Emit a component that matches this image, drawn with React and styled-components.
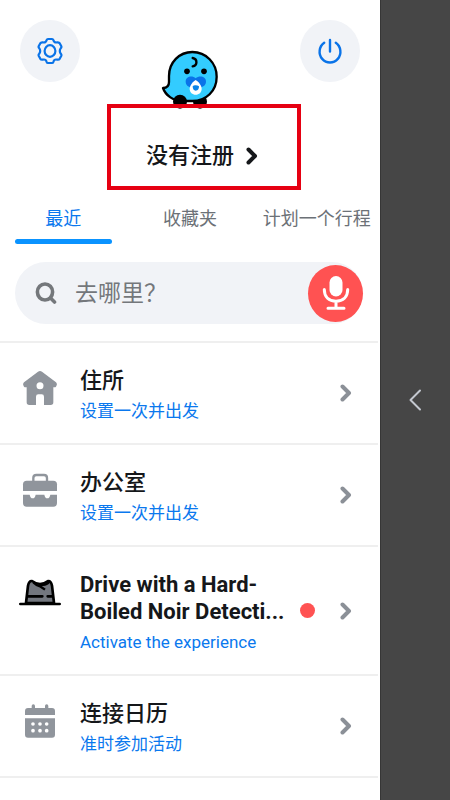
import React, { useState } from "react";
import styled, { createGlobalStyle } from "styled-components";

const GlobalStyle = createGlobalStyle`
  * {
    box-sizing: border-box;
  }
  body {
    margin: 0;
    background: #fff;
    font-family: Roboto, "Noto Sans CJK SC", sans-serif;
  }
  button,
  input {
    font-family: inherit;
    border: none;
    padding: 0;
    background: none;
  }
  button {
    cursor: pointer;
  }
  svg {
    display: block;
    flex-shrink: 0;
  }
`;

const Container = styled.div`
  display: flex;
  min-height: 100vh;
`;

const Panel = styled.main`
  flex: 1;
  min-width: 0;
  background: #fff;
`;

/* Dimmed map to the right of the menu */
const MapSide = styled.aside`
  width: 70px;
  display: flex;
  align-items: center;
  justify-content: center;
  padding-right: 2px;
  background: #464646;
  border-left: 1px solid #363636;
`;

const BackButton = styled.button`
  padding: 8px;
`;

/* Top bar */
const Header = styled.header`
  display: flex;
  align-items: flex-start;
  justify-content: space-between;
  padding: 20px 20px 0;
`;

const RoundButton = styled.button`
  width: 60px;
  height: 62px;
  display: flex;
  align-items: center;
  justify-content: center;
  border-radius: 50%;
  background: #f1f3f7;
`;

const Avatar = styled.svg`
  width: 58px;
  height: 60px;
  margin-top: 30px;
`;

/* Profile name */
const Profile = styled.div`
  display: grid;
  grid-template-columns: 1fr auto 1fr;
  margin-top: 31px;
`;

const ProfileName = styled.button`
  grid-column: 2;
  position: relative;
  color: #15171a;
  font-size: 22px;
  font-weight: 500;
  line-height: 30px;
`;

const ProfileChevron = styled.span`
  display: flex;
  align-items: center;
  padding-left: 12px;
`;

const Highlight = styled.span`
  position: absolute;
  top: -37px;
  right: -67px;
  bottom: -19px;
  left: -39px;
  border: 4px solid #e60012;
  pointer-events: none;
`;

/* Tabs */
const Tabs = styled.div`
  display: grid;
  grid-template-columns: repeat(3, minmax(0, 1fr));
  margin-top: 36px;
`;

const Tab = styled.button`
  padding: 0 15px;
  white-space: nowrap;
  font-size: 18px;
  line-height: 24px;
  color: ${(props) => (props.$active ? "#0a78ee" : "#6c7177")};

  &::after {
    content: "";
    display: block;
    height: 5px;
    margin-top: 8px;
    border-radius: 3px;
    background: ${(props) => (props.$active ? "#0a93ff" : "transparent")};
  }
`;

const TabLabel = styled.span`
  display: flex;
  justify-content: center;
`;

/* Search */
const SearchBox = styled.form`
  display: flex;
  align-items: center;
  height: 62px;
  margin: 18px 17px 17px 15px;
  padding-left: 20px;
  border-radius: 31px;
  background: #f1f3f7;
`;

const Input = styled.input`
  flex: 1;
  min-width: 0;
  height: 40px;
  margin-left: 18px;
  outline: none;
  color: #15171a;
  font-size: 23px;

  &::placeholder {
    color: #74777b;
    opacity: 1;
  }
`;

const MicButton = styled.button`
  width: 55px;
  height: 57px;
  display: flex;
  align-items: center;
  justify-content: center;
  border-radius: 50%;
  background: #ff5252;
`;

/* Places */
const List = styled.ul`
  list-style: none;
  margin: 0 2px 0 0;
  padding: 0;
  border-top: 2px solid #efefef;
`;

const Item = styled.li`
  border-bottom: 2px solid #efefef;
`;

const Row = styled.button`
  display: flex;
  width: 100%;
  padding: 20px 26px 20px 18px;
  text-align: left;
`;

const RowIcon = styled.svg`
  width: 44px;
  height: 34px;
  margin-top: 8px;
  fill: #90959c;
`;

const RowText = styled.span`
  flex: 1;
  min-width: 0;
  margin-left: 18px;
  padding-top: 4px;
`;

const Title = styled.span`
  display: block;
  color: #15171a;
  font-size: 22px;
  font-weight: ${(props) => (props.$bold ? 700 : 500)};
  line-height: 27px;
`;

const Subtitle = styled.span`
  display: block;
  margin-top: 5px;
  color: #0a78ee;
  font-size: 17px;
  line-height: 24px;
`;

const Dot = styled.span`
  width: 15px;
  height: 15px;
  margin-right: 25px;
  align-self: center;
  border-radius: 50%;
  background: #ff5252;
`;

const RowEnd = styled.span`
  display: flex;
  align-self: center;
`;

const Chevron = ({ color }) => (
  <svg width="12" height="18" viewBox="0 0 12 18" aria-hidden="true">
    <path
      d="M2.5 2.5 L9 9 L2.5 15.5"
      fill="none"
      stroke={color}
      strokeWidth="4"
      strokeLinecap="round"
      strokeLinejoin="round"
    />
  </svg>
);

const GearIcon = () => (
  <svg width="26" height="28" viewBox="0 0 26 28" aria-hidden="true">
    <g fill="none" stroke="#0a73e8" strokeWidth="2.2" strokeLinejoin="round">
      <path d="M11 2 H15 Q16 2 16.4 3.2 Q17.2 6 20 5.4 Q22 5 22.8 6.4 L24.2 9 Q24.8 10.2 23.8 11.2 Q21.8 14 23.8 16.8 Q24.8 17.8 24.2 19 L22.8 21.6 Q22 23 20 22.6 Q17.2 22 16.4 24.8 Q16 26 15 26 H11 Q10 26 9.6 24.8 Q8.8 22 6 22.6 Q4 23 3.2 21.6 L1.8 19 Q1.2 17.8 2.2 16.8 Q4.2 14 2.2 11.2 Q1.2 10.2 1.8 9 L3.2 6.4 Q4 5 6 5.4 Q8.8 6 9.6 3.2 Q10 2 11 2 Z" />
      <ellipse cx="13" cy="14" rx="5.4" ry="5.8" />
    </g>
  </svg>
);

const PowerIcon = () => (
  <svg width="26" height="28" viewBox="0 0 26 28" aria-hidden="true">
    <path
      d="M13 3 V14.5 M7.2 5.8 A10.4 10.8 0 1 0 18.8 5.8"
      fill="none"
      stroke="#0a73e8"
      strokeWidth="2.4"
      strokeLinecap="round"
    />
  </svg>
);

const SearchIcon = () => (
  <svg width="22" height="24" viewBox="0 0 22 24" aria-hidden="true">
    <g fill="none" stroke="#74777b" strokeWidth="3.6" strokeLinecap="round">
      <ellipse cx="10" cy="11" rx="7.6" ry="8" />
      <path d="M15.5 17 L19.5 21" />
    </g>
  </svg>
);

const MicIcon = () => (
  <svg width="28" height="36" viewBox="0 0 28 36" aria-hidden="true">
    <rect x="7.5" y="1" width="13" height="20.5" rx="6.5" fill="#fff" />
    <path
      d="M2.3 14.5 C2.3 22 7 26.2 14 26.2 C21 26.2 25.7 22 25.7 14.5 M14 26.2 V33 M6 33.2 H22"
      fill="none"
      stroke="#fff"
      strokeWidth="3"
      strokeLinecap="round"
    />
  </svg>
);

const BackIcon = () => (
  <svg width="14" height="24" viewBox="0 0 14 24" aria-hidden="true">
    <path
      d="M12 2.5 L2.5 12 L12 21.5"
      fill="none"
      stroke="#c4c8d0"
      strokeWidth="2"
      strokeLinecap="round"
      strokeLinejoin="round"
    />
  </svg>
);

const BabyWazer = () => (
  <Avatar viewBox="33 31 174 180" aria-hidden="true">
    <circle cx="150" cy="186" r="21" />
    <path
      d="M39 145 C52 145 57 139 57 127 V109 C57 68 88 37 127 37 C168 37 200 70 200 111 C200 154 168 184 127 184 H99 C70 184 47 168 39 145 Z"
      fill="#33ccff"
      stroke="#000"
      strokeWidth="7"
      strokeLinejoin="round"
    />
    <circle cx="90" cy="186" r="21" />
    <circle cx="111" cy="95" r="8.5" />
    <circle cx="162" cy="95" r="8.5" />
    <path
      d="M128 55 C143 58 143 77 128 80"
      fill="none"
      stroke="#000"
      strokeWidth="7"
      strokeLinecap="round"
    />
    <path
      d="M137 116 C128 107 107 109 107 126 C107 139 120 145 137 146 C154 145 168 139 168 126 C168 109 147 107 137 116 Z"
      fill="#0a73e8"
    />
    <path
      d="M137 121 C145 126 155 137 155 147 C155 158 147 165 137 165 C127 165 119 158 119 147 C119 137 129 126 137 121 Z"
      fill="#fff"
    />
    <path
      d="M128 140 C132 136 142 136 147 140 C147 148 144 153 137 153 C131 153 128 148 128 140 Z"
      fill="#0a83e8"
    />
  </Avatar>
);

const HomeIcon = () => (
  <RowIcon viewBox="54 93 132 102" aria-hidden="true">
    <path
      fillRule="evenodd"
      d="M114 95 Q120 91 126 95 L168 127 Q172 131 170 136 L168 140 Q167 142 162 142 H160 V187 Q160 195 152 195 H132 V170 Q132 163 125 163 H115 Q108 163 108 170 V195 H88 Q80 195 80 187 V142 H78 Q73 142 72 140 L70 136 Q68 131 72 127 Z M120 127 A10.5 10.5 0 1 0 120 148 A10.5 10.5 0 1 0 120 127 Z"
    />
  </RowIcon>
);

const WorkIcon = () => (
  <RowIcon viewBox="54 399 132 102" aria-hidden="true">
    <path
      d="M100 424 V414 Q100 405 109 405 H132 Q141 405 141 414 V424"
      fill="none"
      stroke="#90959c"
      strokeWidth="7"
    />
    <path d="M80 422 H160 Q171 422 171 433 V453 H69 V433 Q69 422 80 422 Z" />
    <path d="M69 464 H89 Q91 475 98 475 Q105 475 107 464 H133 Q135 475 142 475 Q149 475 151 464 H171 V489 Q171 500 160 500 H80 Q69 500 69 489 Z" />
  </RowIcon>
);

const HatIcon = () => (
  <RowIcon viewBox="24 30 132 102" aria-hidden="true">
    <path
      d="M48 114 L54 62 Q57 47 66 48 Q77 56 90 57 Q103 56 114 48 Q123 47 126 62 L132 114 Z"
      fill="#73777f"
      stroke="#000"
      strokeWidth="8"
      strokeLinejoin="round"
    />
    <path
      d="M70 52 Q79 61 90 64 Q98 69 105 74 M88 58 Q108 64 118 50"
      fill="none"
      stroke="#000"
      strokeWidth="7"
    />
    <path
      d="M54 94 H97 M113 94 H128 M31 117 H149"
      fill="none"
      stroke="#000"
      strokeWidth="8"
      strokeLinecap="round"
    />
  </RowIcon>
);

const CalendarIcon = () => (
  <RowIcon viewBox="54 477 132 102" aria-hidden="true">
    <path d="M84 489 H95 V483 Q95 478 100 478 Q105 478 105 483 V489 H135 V483 Q135 478 140 478 Q145 478 145 483 V489 H156 Q165 489 165 498 V510 H75 V498 Q75 489 84 489 Z" />
    <path d="M75 520 H165 V569 Q165 578 156 578 H84 Q75 578 75 569 Z" />
    <g fill="#fff">
      <circle cx="99" cy="537" r="5.5" />
      <circle cx="120" cy="537" r="5.5" />
      <circle cx="140" cy="537" r="5.5" />
      <circle cx="99" cy="557" r="5.5" />
      <circle cx="120" cy="557" r="5.5" />
      <circle cx="140" cy="557" r="5.5" />
    </g>
  </RowIcon>
);

const tabs = ["最近", "收藏夹", "计划一个行程"];

const places = [
  { icon: HomeIcon, title: "住所", subtitle: "设置一次并出发" },
  { icon: WorkIcon, title: "办公室", subtitle: "设置一次并出发" },
  {
    icon: HatIcon,
    title: "Drive with a Hard-Boiled Noir Detecti...",
    subtitle: "Activate the experience",
    isNew: true,
  },
  { icon: CalendarIcon, title: "连接日历", subtitle: "准时参加活动" },
];

const App = () => {
  const [activeTab, setActiveTab] = useState(0);

  return (
    <Container>
      <GlobalStyle />
      <Panel>
        <Header>
          <RoundButton aria-label="设置">
            <GearIcon />
          </RoundButton>
          <BabyWazer />
          <RoundButton aria-label="关闭">
            <PowerIcon />
          </RoundButton>
        </Header>
        <Profile>
          <ProfileName>
            没有注册
            <Highlight />
          </ProfileName>
          <ProfileChevron>
            <Chevron color="#15171a" />
          </ProfileChevron>
        </Profile>
        <Tabs role="tablist">
          {tabs.map((tab, index) => (
            <Tab
              key={tab}
              role="tab"
              aria-selected={index === activeTab}
              $active={index === activeTab}
              onClick={() => setActiveTab(index)}
            >
              <TabLabel>{tab}</TabLabel>
            </Tab>
          ))}
        </Tabs>
        <SearchBox onSubmit={(e) => e.preventDefault()}>
          <SearchIcon />
          <Input placeholder="去哪里？" aria-label="去哪里？" />
          <MicButton type="button" aria-label="语音搜索">
            <MicIcon />
          </MicButton>
        </SearchBox>
        <List>
          {places.map(({ icon: Icon, title, subtitle, isNew }) => (
            <Item key={title}>
              <Row>
                <Icon />
                <RowText>
                  <Title $bold={isNew}>{title}</Title>
                  <Subtitle>{subtitle}</Subtitle>
                </RowText>
                {isNew && <Dot />}
                <RowEnd>
                  <Chevron color="#8b9097" />
                </RowEnd>
              </Row>
            </Item>
          ))}
        </List>
      </Panel>
      <MapSide>
        <BackButton aria-label="返回">
          <BackIcon />
        </BackButton>
      </MapSide>
    </Container>
  );
};

export default App;
